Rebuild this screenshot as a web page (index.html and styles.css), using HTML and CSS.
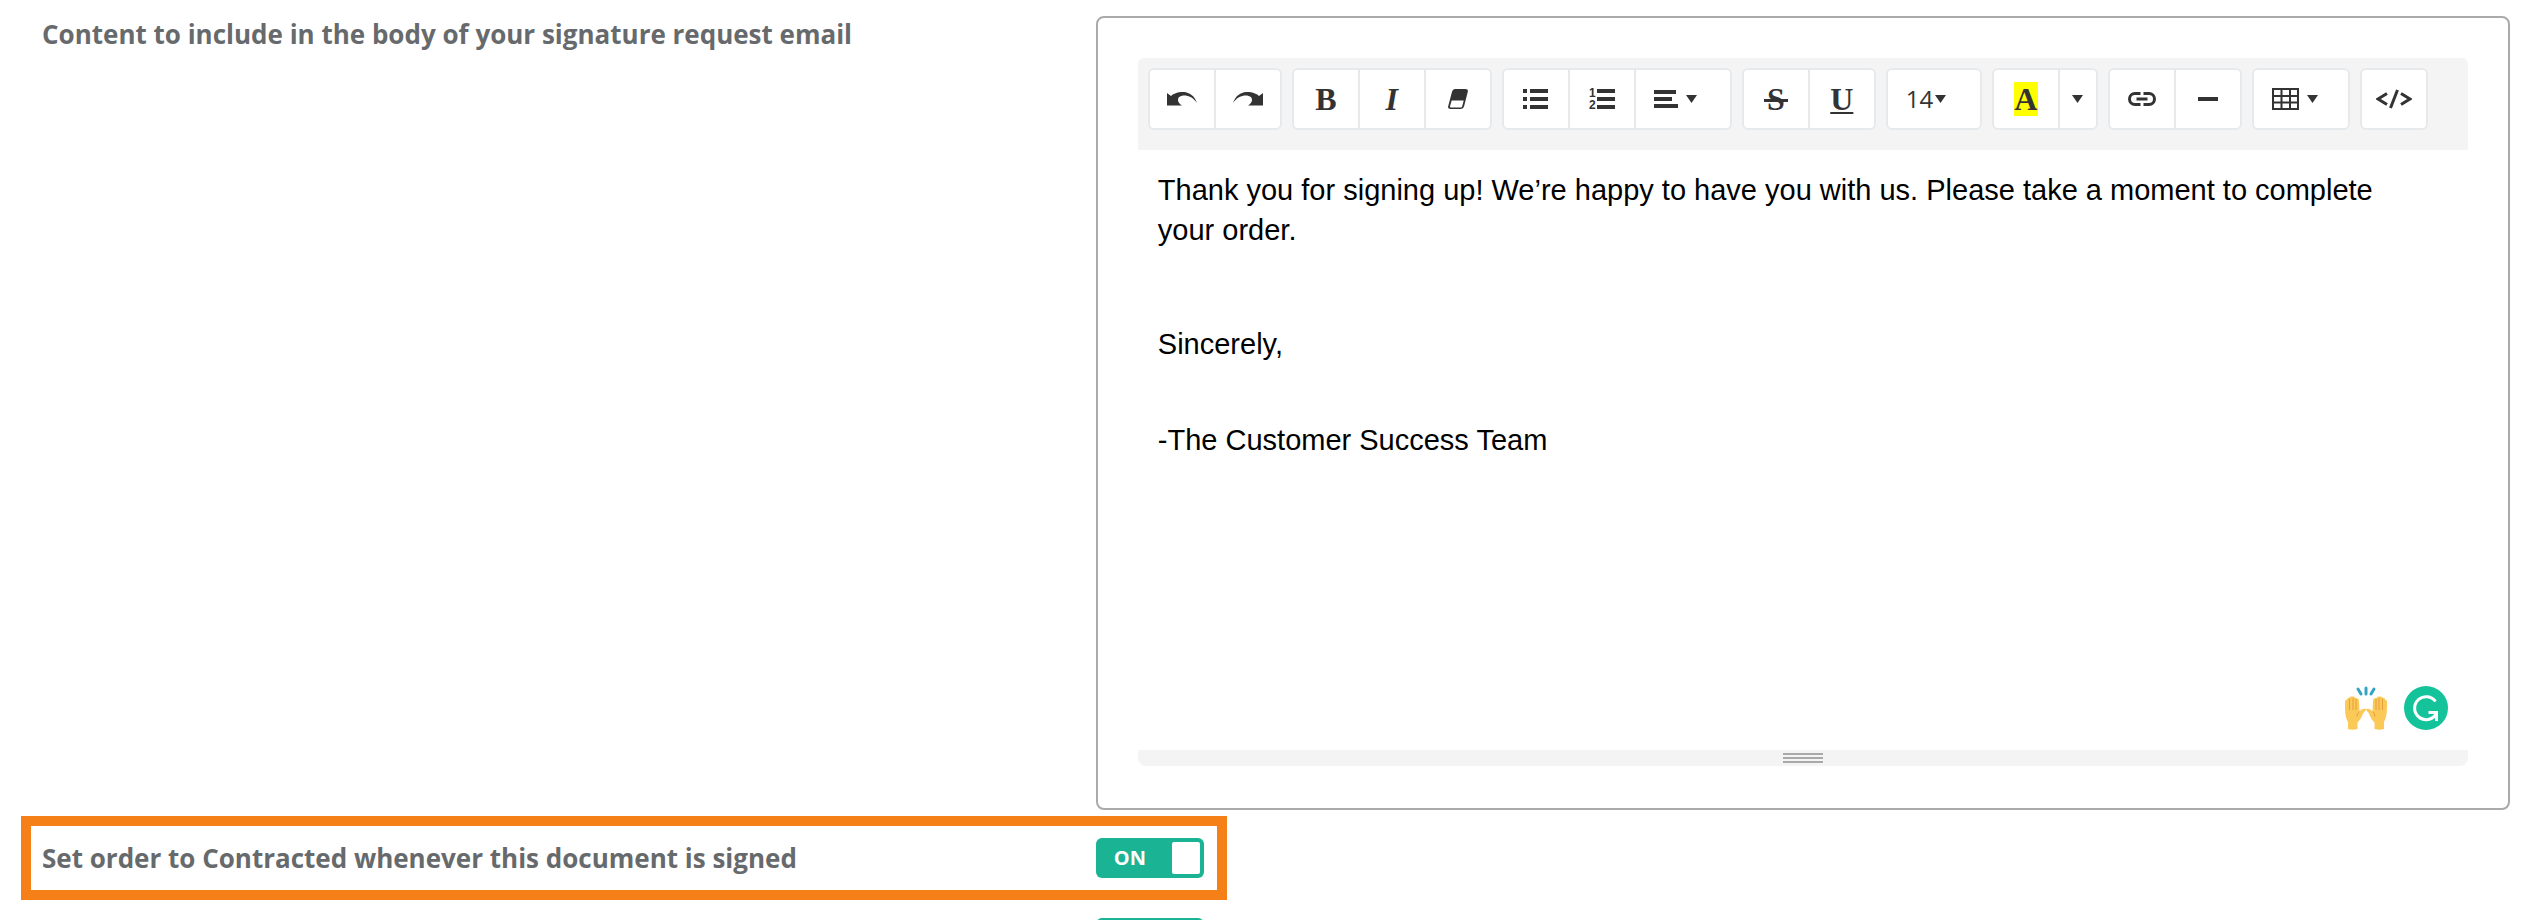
FILE: index.html
```html
<!DOCTYPE html>
<html lang="en">
<head>
  <meta charset="UTF-8">
  <title>Signature Settings</title>
  <link rel="stylesheet" href="styles.css">
</head>
<body>
  <form class="settings">
    <div class="row">
      <span class="row-label" id="bodyLabel">Content to include in the body of your signature request email</span>

      <div class="panel">
        <div class="toolbar" role="toolbar" aria-label="Formatting">
          <div class="btn-group">
            <button type="button" class="btn" aria-label="Undo">
              <svg width="30" height="14" viewBox="0 0 30 14"><path d="M0 1l4 3C9-1 25-4 30 11 25 3 16 2 12 5c-2 3-1 6 3 8.500H0z"/></svg>
            </button>
            <button type="button" class="btn" aria-label="Redo">
              <svg width="30" height="14" viewBox="0 0 30 14"><path d="M30 1l-4 3C21-1 5-4 0 11 5 3 14 2 18 5c2 3 1 6-3 8.500H30z"/></svg>
            </button>
          </div>

          <div class="btn-group">
            <button type="button" class="btn glyph" aria-label="Bold">B</button>
            <button type="button" class="btn glyph italic" aria-label="Italic">I</button>
            <button type="button" class="btn" aria-label="Remove formatting">
              <svg width="20" height="20" viewBox="0 0 20 20"><path d="M7 0H17.500q3 0 2.300 2.700l-3.700 14.600Q15.500 20 13 20H2.500Q-.5 20 .2 17.300L4 2.700Q4.700 0 7 0z"/><path class="cutout" d="M3.700 11.500h12l-1.500 5.800q-.3 1.200-1.300 1.200H2.900q-1.200 0-.9-1.200z"/></svg>
            </button>
          </div>

          <div class="btn-group">
            <button type="button" class="btn" aria-label="Bulleted list">
              <svg width="25" height="20" viewBox="0 0 25 20"><path d="M0 0h4v4H0zM7 0h18v4H7zM0 8h4v4H0zM7 8h18v4H7zM0 16h4v4H0zM7 16h18v4H7z"/></svg>
            </button>
            <button type="button" class="btn" aria-label="Numbered list">
              <svg width="26" height="28" viewBox="0 -3 26 28"><text class="num" x="0" y="9">1</text><text class="num" x="0" y="21">2</text><path d="M8 1h18v4H8zM8 9h18v4H8zM8 17h18v4H8z"/></svg>
            </button>
            <button type="button" class="btn dropdown" aria-label="Alignment">
              <svg width="24" height="18" viewBox="0 0 24 18"><path d="M0 0h22v4H0zM0 7h18v4H0zM0 14h24v4H0z"/></svg>
              <svg class="caret" width="11" height="8" viewBox="0 0 11 8"><path d="M0 0h11L5.500 8z"/></svg>
            </button>
          </div>

          <div class="btn-group">
            <button type="button" class="btn glyph" aria-label="Strikethrough"><span class="strike">S</span></button>
            <button type="button" class="btn glyph underline" aria-label="Underline">U</button>
          </div>

          <div class="btn-group">
            <button type="button" class="btn dropdown font-size" aria-label="Font size">14<svg class="caret" width="11" height="8" viewBox="0 0 11 8"><path d="M0 0h11L5.500 8z"/></svg></button>
          </div>

          <div class="btn-group">
            <button type="button" class="btn glyph" aria-label="Recent color"><span class="swatch">A</span></button>
            <button type="button" class="btn caret-btn" aria-label="More colors">
              <svg class="caret" width="11" height="8" viewBox="0 0 11 8"><path d="M0 0h11L5.500 8z"/></svg>
            </button>
          </div>

          <div class="btn-group">
            <button type="button" class="btn" aria-label="Link">
              <svg class="stroked" width="28" height="14" viewBox="0 0 28 14"><path d="M12.500 1.500H7a5.500 5.500 0 0 0 0 11h5.500M15.500 1.500H21a5.500 5.500 0 0 1 0 11h-5.500"/><path d="M8.500 7h11"/></svg>
            </button>
            <button type="button" class="btn" aria-label="Horizontal rule">
              <svg width="20" height="4" viewBox="0 0 20 4"><path d="M0 0h20v4H0z"/></svg>
            </button>
          </div>

          <div class="btn-group">
            <button type="button" class="btn dropdown" aria-label="Table">
              <svg class="grid" width="27" height="22" viewBox="0 0 27 22"><path d="M1 1h25v20H1zM1 8h25M1 14.500h25M9.500 1v20M18 1v20"/></svg>
              <svg class="caret" width="11" height="8" viewBox="0 0 11 8"><path d="M0 0h11L5.500 8z"/></svg>
            </button>
          </div>

          <div class="btn-group">
            <button type="button" class="btn" aria-label="Code view">
              <svg class="stroked" width="36" height="20" viewBox="0 0 36 20"><path d="M11 4.500L2 10l9 5.500M21.500 1l-7 18M25 4.500l9 5.500-9 5.500"/></svg>
            </button>
          </div>
        </div>

        <div class="editor">
          <div class="editable" contenteditable="true" spellcheck="false" role="textbox" aria-multiline="true" aria-labelledby="bodyLabel">
            <p class="intro">Thank you for signing up! We’re happy to have you with us. Please take a moment to complete your order.</p>
            <p>Sincerely,</p>
            <p>-The Customer Success Team</p>
          </div>

          <div class="badges">
            <svg width="42" height="44" viewBox="0 0 42 44">
              <g class="rays"><path d="M13 3l3 5M21 2v6M29 3l-3 5"/></g>
              <g id="hand">
                <path class="skin" d="M3 43V36C0 31 0 25 0 16q0-2.500 2-2.500 0-2 2.500-2Q5.500 10 7.500 10.500q2-.5 3 1.500 3-.5 3.500 2.500l.5 11c2-2.500 4-3 6.500-2.500 0 2-2 2.500-3 4.500-1.500 4-3.500 7.500-5.500 9V43q-5 1.500-9.500 0z"/>
                <path class="crease" d="M4.500 13v11M8 12v12M11 13v11M14.500 25.500q-2.500 2-2.500 5"/>
              </g>
              <use href="#hand" transform="matrix(-1 0 0 1 42 0)"/>
            </svg>
            <svg width="44" height="44" viewBox="0 0 44 44">
              <circle class="disc" cx="22" cy="22" r="22"/>
              <path class="mark" d="M31.500 15.500a11.500 11.500 0 1 0-.5 14l2-2.500"/>
              <path class="mark" d="M24.500 26.500h8V35"/>
            </svg>
          </div>
        </div>

        <div class="resizebar">
          <div class="grip"></div>
          <div class="grip"></div>
          <div class="grip"></div>
        </div>
      </div>
    </div>

    <div class="row toggle-row highlighted">
      <label class="row-label" for="contracted">Set order to Contracted whenever this document is signed</label>
      <label class="switch">
        <input type="checkbox" id="contracted" checked>
        <span class="state">ON</span>
        <span class="knob"></span>
      </label>
    </div>

    <div class="row toggle-row">
      <span></span>
      <label class="switch">
        <input type="checkbox" aria-label="Next setting" checked>
      </label>
    </div>
  </form>
</body>
</html>
```
FILE: styles.css
```css
:root {
  --label: #676a6c;
  --ink: #333;
  --green: #1ab394;
  --orange: #f58018;
  --label-col: 42.7%;
}

*,
*::after {
  box-sizing: border-box;
}

body {
  margin: 0;
  height: 100vh;
  overflow: hidden;
  background: #fff;
  color: var(--label);
  font-family: "Open Sans", sans-serif;
}

.settings {
  padding: 16px 26px 0 42px;
}

.row {
  display: grid;
  grid-template-columns: var(--label-col) minmax(0, 1fr);
}

.row-label {
  font-size: 26px;
  font-weight: 700;
  line-height: 36px;
}

.panel {
  margin-bottom: 8px;
  padding: 40px 40px 42px;
  border: 2px solid #aaa;
  border-radius: 8px;
}

/* toolbar */
.toolbar {
  display: flex;
  flex-wrap: wrap;
  gap: 10px;
  padding: 10px 10px 20px;
  background: #f4f4f4;
  border-radius: 6px 6px 0 0;
}

.btn-group {
  display: flex;
}

.btn {
  display: flex;
  align-items: center;
  justify-content: center;
  width: 68px;
  height: 62px;
  padding: 0;
  background: #fff;
  border: 2px solid #e7eaec;
  color: var(--ink);
  cursor: pointer;
}

.btn + .btn {
  margin-left: -2px;
}

.btn:first-child {
  border-top-left-radius: 6px;
  border-bottom-left-radius: 6px;
}

.btn:last-child {
  border-top-right-radius: 6px;
  border-bottom-right-radius: 6px;
}

.btn:hover {
  border-color: #d2d2d2;
}

.btn svg {
  fill: currentColor;
}

.btn .cutout {
  fill: #fff;
}

.btn .stroked,
.btn .grid {
  fill: none;
  stroke: currentColor;
  stroke-width: 3;
}

.btn .grid {
  stroke-width: 2;
}

.num {
  font: bold 12px "Liberation Sans", sans-serif;
}

.glyph {
  font: bold 32px/34px "Liberation Serif", serif;
}

.italic {
  font-style: italic;
}

.strike {
  position: relative;
}

.strike::after {
  content: "";
  position: absolute;
  top: 17px;
  left: -3px;
  right: -3px;
  height: 3px;
  background: currentColor;
}

.underline {
  text-decoration: underline 2px;
  text-underline-offset: 2px;
}

.dropdown {
  justify-content: flex-start;
  gap: 8px;
  width: 98px;
  padding-left: 18px;
}

.font-size {
  gap: 2px;
  width: 96px;
  font: 24px/34px "Open Sans", sans-serif;
}

.caret-btn {
  width: 40px;
}

.swatch {
  width: 24px;
  background: #ff0;
}

/* editing area */
.editor {
  position: relative;
}

.editable {
  min-height: 600px;
  padding: 20px 40px 20px 20px;
  color: #000;
  font: 29px/40px "Liberation Sans", sans-serif;
  outline: none;
}

.editable p {
  margin: 0 0 56px;
}

.editable .intro {
  margin-bottom: 74px;
}

.badges {
  position: absolute;
  right: 20px;
  bottom: 20px;
  display: flex;
  gap: 17px;
}

.rays {
  fill: none;
  stroke: #35a3c4;
  stroke-width: 3;
  stroke-linecap: round;
}

.skin {
  fill: #fbc957;
}

.crease {
  fill: none;
  stroke: #e59f3c;
  stroke-width: 1;
}

.disc {
  fill: #15c39a;
}

.mark {
  fill: none;
  stroke: #fff;
  stroke-width: 3;
}

.resizebar {
  display: flex;
  flex-direction: column;
  align-items: center;
  justify-content: center;
  gap: 2px;
  height: 16px;
  background: #f4f4f4;
  border-radius: 0 0 8px 8px;
  cursor: ns-resize;
}

.grip {
  width: 40px;
  height: 2px;
  background: #a9a9a9;
}

/* switches */
.toggle-row {
  position: relative;
  align-items: center;
  padding: 20px 0;
}

.highlighted::after {
  content: "";
  position: absolute;
  top: -2px;
  bottom: -2px;
  left: -21px;
  width: calc(var(--label-col) + 152px);
  border: 10px solid var(--orange);
  pointer-events: none;
}

.switch {
  display: flex;
  align-items: center;
  justify-content: space-between;
  width: 108px;
  height: 40px;
  padding: 4px 4px 4px 18px;
  background: var(--green);
  border-radius: 6px;
  color: #fff;
  font-size: 20px;
  font-weight: 700;
  line-height: 32px;
  cursor: pointer;
}

.switch input {
  position: absolute;
  opacity: 0;
}

.knob {
  width: 28px;
  height: 32px;
  background: #fff;
  border-radius: 2px;
}
```
